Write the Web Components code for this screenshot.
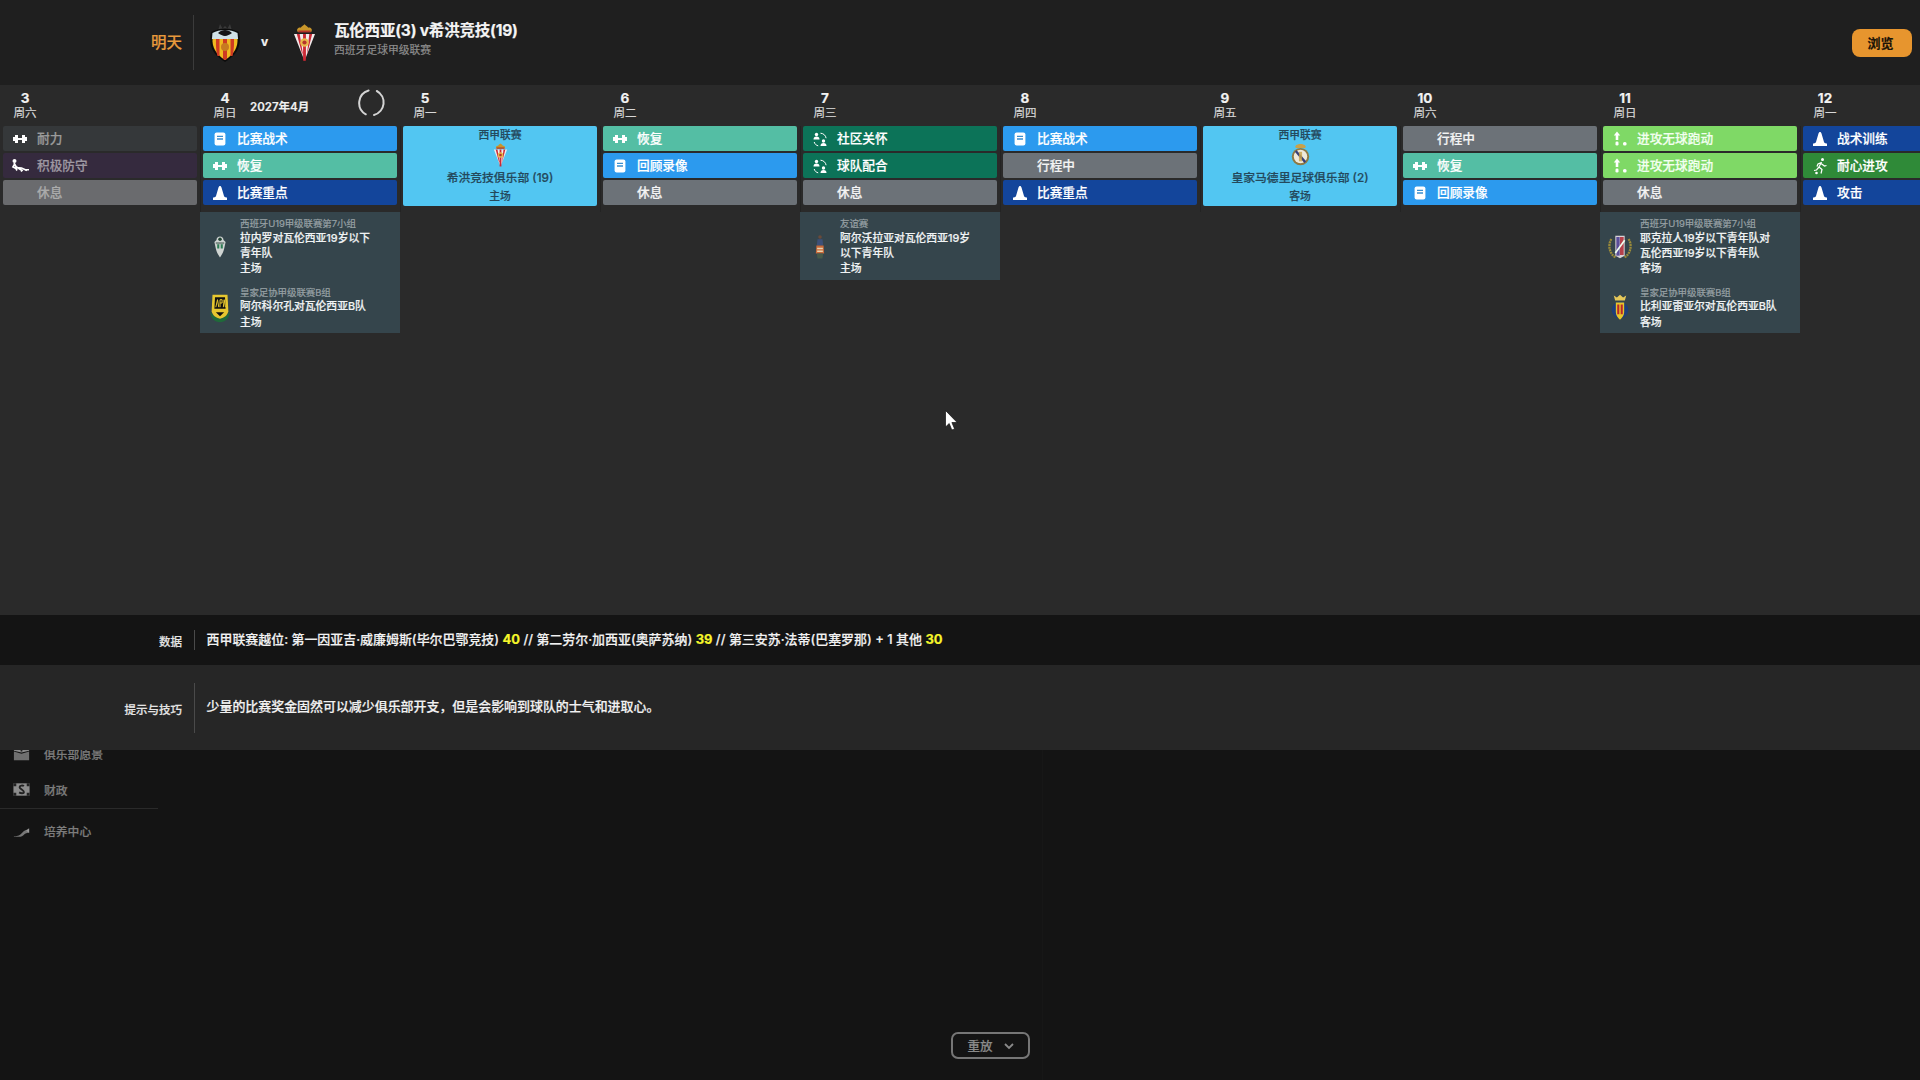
<!DOCTYPE html>
<html lang="zh">
<head>
<meta charset="utf-8">
<title>日程</title>
<style>
html,body{margin:0;height:100%;background:#141414;overflow:hidden}
body{
    font-family:Inter,"Noto Sans CJK SC",sans-serif;
    -webkit-text-stroke:.2px currentColor;
    color:#eee;
    display:flex;
    flex-direction:column;
    width:1920px;
    height:1080px;
}
</style>
</head>
<body>

<top-bar>
    <team-crest slot="home" name="valencia" w="32" h="40"></team-crest>
    <team-crest slot="away" name="gijon" w="23" h="39"></team-crest>
    <span slot="title">瓦伦西亚(3) v希洪竞技(19)</span>
    <span slot="sub">西班牙足球甲级联赛</span>
</top-bar>

<week-strip>
    <day-column num="3" day="周六">
        <day-slot kind="dimdark" icon="dumbbell">耐力</day-slot>
        <day-slot kind="dimpurple" icon="slide">积极防守</day-slot>
        <day-slot kind="dimgray">休息</day-slot>
    </day-column>
    <day-column num="4" day="周日" month="2027年4月">
        <day-slot kind="blue" icon="doc">比赛战术</day-slot>
        <day-slot kind="teal" icon="dumbbell">恢复</day-slot>
        <day-slot kind="navy" icon="cone">比赛重点</day-slot>
        <event-panel slot="events">
            <event-row crest="ranero" league="西班牙U19甲级联赛第7小组" place="主场">拉内罗对瓦伦西亚19岁以下青年队</event-row>
            <event-row crest="apa" league="皇家足协甲级联赛B组" place="主场">阿尔科尔孔对瓦伦西亚B队</event-row>
        </event-panel>
    </day-column>
    <day-column num="5" day="周一">
        <match-card crest="gijon" league="西甲联赛" place="主场">希洪竞技俱乐部 (19)</match-card>
    </day-column>
    <day-column num="6" day="周二">
        <day-slot kind="teal" icon="dumbbell">恢复</day-slot>
        <day-slot kind="blue" icon="doc">回顾录像</day-slot>
        <day-slot kind="gray">休息</day-slot>
    </day-column>
    <day-column num="7" day="周三">
        <day-slot kind="forest" icon="community">社区关怀</day-slot>
        <day-slot kind="forest" icon="community">球队配合</day-slot>
        <day-slot kind="gray">休息</day-slot>
        <event-panel slot="events">
            <event-row crest="alvorada" league="友谊赛" place="主场">阿尔沃拉亚对瓦伦西亚19岁以下青年队</event-row>
        </event-panel>
    </day-column>
    <day-column num="8" day="周四">
        <day-slot kind="blue" icon="doc">比赛战术</day-slot>
        <day-slot kind="gray">行程中</day-slot>
        <day-slot kind="navy" icon="cone">比赛重点</day-slot>
    </day-column>
    <day-column num="9" day="周五">
        <match-card crest="madrid" league="西甲联赛" place="客场">皇家马德里足球俱乐部 (2)</match-card>
    </day-column>
    <day-column num="10" day="周六">
        <day-slot kind="gray">行程中</day-slot>
        <day-slot kind="teal" icon="dumbbell">恢复</day-slot>
        <day-slot kind="blue" icon="doc">回顾录像</day-slot>
    </day-column>
    <day-column num="11" day="周日">
        <day-slot kind="lime" icon="attack">进攻无球跑动</day-slot>
        <day-slot kind="lime" icon="attack">进攻无球跑动</day-slot>
        <day-slot kind="gray">休息</day-slot>
        <event-panel slot="events">
            <event-row crest="yeclano" league="西班牙U19甲级联赛第7小组" place="客场">耶克拉人19岁以下青年队对瓦伦西亚19岁以下青年队</event-row>
            <event-row crest="villarreal" league="皇家足协甲级联赛B组" place="客场">比利亚雷亚尔对瓦伦西亚B队</event-row>
        </event-panel>
    </day-column>
    <day-column num="12" day="周一">
        <day-slot kind="navy" icon="cone">战术训练</day-slot>
        <day-slot kind="grass" icon="runner">耐心进攻</day-slot>
        <day-slot kind="navy" icon="cone">攻击</day-slot>
    </day-column>
</week-strip>

<info-row label="数据" tone="dark" rowheight="50" seph="20">西甲联赛越位: 第一因亚吉·威廉姆斯(毕尔巴鄂竞技) <b>40</b> // 第二劳尔·加西亚(奥萨苏纳) <b>39</b> // 第三安苏·法蒂(巴塞罗那) + 1 其他 <b>30</b></info-row>
<info-row label="提示与技巧" tone="mid" rowheight="85" seph="50">少量的比赛奖金固然可以减少俱乐部开支，但是会影响到球队的士气和进取心。</info-row>

<lower-area>
    <nav-item icon="vision">俱乐部愿景</nav-item>
    <nav-item icon="money" divider>财政</nav-item>
    <nav-item icon="growth">培养中心</nav-item>
</lower-area>

<screen-cursor></screen-cursor>

<script>
// icones des creneaux, dessinees dans une boite de 20x20
const ICONS = {
    dumbbell: `<path d="M3 8h2V6h3v3h4V6h3v2h2v4h-2v2h-3v-3H8v3H5v-2H3z" fill="#fff"/>`,
    doc: `<rect x="4.600" y="3.600" width="10.800" height="12.800" rx="2" fill="#fff"/><path d="M7 7.400h6M7 10h6" stroke="#3a8fd0" stroke-width="1.400"/>`,
    cone: `<path d="M10 3c.8 0 1.200.6 1.500 1.600L14 13c.3 1 1.500 1.400 3 1.600V17H3v-2.400c1.500-.2 2.700-.6 3-1.600l2.500-8.400C8.800 3.600 9.200 3 10 3z" fill="#fff"/>`,
    community: `<circle cx="6.500" cy="5.500" r="1.700" fill="#fff"/><path d="M3.500 10.500c0-2 1-3 3-3s3 1 3 3z" fill="#fff"/><circle cx="13.500" cy="12" r="1.700" fill="#fff"/><path d="M10.500 17c0-2 1-3 3-3s3 1 3 3z" fill="#fff"/><path d="M10.500 4.200c3 .2 5.200 2.200 5.600 5M4.200 13c.5 2 2 3.400 4 3.800" fill="none" stroke="#fff" stroke-width="1"/>`,
    attack: `<path d="M7 2.500l3.200 4H8.300V11H5.700V6.500H3.800z" fill="#fff"/><rect x="5.500" y="12.500" width="3" height="4" rx="1.300" fill="#fff"/><rect x="13" y="13" width="3.600" height="3.600" rx="1.600" fill="#fff"/>`,
    runner: `<circle cx="12.500" cy="3.500" r="1.500" fill="#fff"/><path d="M11.500 6L9 11l3 2.500-1 4M11 7.500l3.500 2.500 2-.5M9 11l-2.500 3-2.500.5M11.500 6.500L8 8l-1 2.500" fill="none" stroke="#fff" stroke-width="1.200"/><circle cx="6.500" cy="17" r="1.300" fill="#fff"/>`,
    slide: `<circle cx="4.500" cy="5" r="2" fill="#fff"/><path d="M4 7l2.500 4.500 5 .5 5.500 2.500M5 7.500l-2 3.500 3 1.500 1 2M6.500 11l5.500 3.500-1 1" fill="none" stroke="#fff" stroke-width="1.700"/><rect x="15" y="13" width="4" height="1.500" fill="#fff"/>`,
    vision: `<path d="M2 3h16v4l-8 2-8-2z" fill="#8a8a8a"/><path d="M2 8l8 2.200L18 8v9H2z" fill="#6f6f6f"/><circle cx="10" cy="7" r="1" fill="#222"/>`,
    money: `<rect x="1.500" y="3.500" width="17" height="13" fill="#8c8c8c"/><path d="M1.500 3.500h3v3h-3zM15.500 3.500h3v3h-3zM1.500 13.500h3v3h-3zM15.500 13.500h3v3h-3z" fill="#222"/><path d="M12.500 6.500c-1-1-4.500-1-4.500 1s4.500 3 4.500 5-3.500 1.500-5 .5" fill="none" stroke="#222" stroke-width="2"/>`,
    growth: `<path d="M2 16c5-.3 6-1 8.500-3.500C12.500 10.500 14 9.300 18 9v3c-3.500.5-4.500 1.500-6 3-1 1-2 1.500-3 1.500H2z" fill="#777"/><path d="M18 7.500v5l-3-2.500z" fill="#999"/>`,
}

// ecussons, simplifies
const CRESTS = {
    valencia: [32, 40, `
        <path d="M16 3l2.500 2.500L21 1l1.500 5c3 .8 5.500 2 7.500 4H2c2-2 4.500-3.200 7.500-4L11 1l2.500 4.500z" fill="#3a3a3a"/>
        <path d="M2 9c4-2.500 9-3.500 14-3.500S26 6.500 30 9c2 11 1 21-14 30C1 30 0 20 2 9z" fill="#0c0c0c"/>
        <path d="M3.500 10c3.500-2 8-3 12.500-3s9 1 12.500 3l.6 6H2.900z" fill="#cfe0e6"/>
        <path d="M9 10c2-2 4.500-3 7-3s5 1 7 3c-2.500 1.600-4.500 3-7 3s-4.500-1.400-7-3z" fill="#141414"/>
        <path d="M3.500 16h25c.4 8-3 15-12.500 21C6.500 31 3.100 24 3.500 16z" fill="#f0b820"/>
        <path d="M7 16h3.500v17H8.500C7.200 29 6.800 22 7 16zM14 16h4v20l-2 1-2-1zM21.500 16H25c.2 6-.2 13-1.500 17h-2z" fill="#cf3a22"/>
        <circle cx="16" cy="24" r="4" fill="#c77a20"/>`],
    gijon: [24, 40, `
        <path d="M5 9c-2-3 1-5 3-4.500C9 3 10.500 2.500 12 1c1.500 1.500 3 2 4 3.500 2-.5 5 1.500 3 4.500z" fill="#c9962a"/>
        <path d="M5.500 7.500h13v2h-13z" fill="#b5342b"/>
        <path d="M1 11h22L12 39z" fill="#f2ecec"/>
        <path d="M4 11h3l3.500 22-1.500-3zM10.500 11h3v28h-3zM17 11h3l-5.500 22z" fill="#c8202c" opacity=".95"/>
        <circle cx="12" cy="20" r="4.500" fill="#e8b84a"/><circle cx="12" cy="20" r="2.200" fill="#b5342b"/>`],
    madrid: [24, 30, `
        <path d="M6 6c-2-3 2-5 6-5s8 2 6 5z" fill="#c9a24a"/>
        <circle cx="12" cy="17" r="11" fill="#8f7a45"/>
        <circle cx="12" cy="17" r="8.500" fill="#efeadc"/>
        <path d="M6 10l12 14" stroke="#38407a" stroke-width="3"/>
        <path d="M10 11h4v12h-4z" fill="#c9a24a" opacity=".8"/>`],
    ranero: [20, 34, `
        <path d="M5 7c0-3 2-5 5-5s5 2 5 5l3 3-2 9c-1 5-3 8-6 13-3-5-5-8-6-13L2 10z" fill="#cfd4d2"/>
        <path d="M4 10h12v3H4z" fill="#7d8c86"/>
        <path d="M6 13h3v6H6zM11 13h3v6h-3z" fill="#2f7d55"/>
        <circle cx="10" cy="6" r="2.500" fill="#243"/>`],
    apa: [26, 36, `
        <path d="M1 22c1 9 6 13 12 13s11-4 12-13c-3 5-7 8-12 8S4 27 1 22z" fill="#1f6a3a"/>
        <path d="M4 2h18l1 20c-1 5-5 8-10 9-5-1-9-4-10-9z" fill="#e6c72f"/>
        <path d="M7 5h12l.7 14H6.300z" fill="#111"/>
        <path d="M8 17l2-9 1.500 9M13 17V8h2.500v4H13M17 17l1-9 1.500 9" stroke="#e6c72f" stroke-width="1.200" fill="none"/>
        <path d="M8 23h10l-5 5z" fill="#111"/>`],
    alvorada: [14, 36, `
        <circle cx="7" cy="4" r="2.500" fill="#6a4a3a"/>
        <path d="M3.500 7h7l1 9h-9z" fill="#3d5078"/>
        <path d="M2 16h10l.8 11H1.200z" fill="#c96a3a"/>
        <path d="M3 19h8v2H3zM3 23h8v2H3z" fill="#e6d4b0"/>
        <path d="M2.500 27h9l-1 7h-7z" fill="#475a4a"/>`],
    yeclano: [36, 40, `
        <path d="M5 8C0 16 1 30 12 36M31 8c5 8 4 22-7 28" fill="none" stroke="#9a8a3a" stroke-width="3.500" stroke-dasharray="3 1"/>
        <path d="M11 3h14v30l-7 4-7-4z" fill="#d8d2d6"/>
        <path d="M12.500 5h5v28h-5z" fill="#5a4d9a"/><path d="M18 5h5.500v27H18z" fill="#b5404a"/>
        <path d="M11 29L25 10" stroke="#efe" stroke-width="2.500"/>`],
    villarreal: [26, 40, `
        <path d="M6 9L4 2l4.500 3L13 1l4.500 4L22 2l-2 7z" fill="#e6c85a"/>
        <circle cx="13" cy="23" r="12" fill="#1e3f7a"/>
        <path d="M7 12h12v14c0 5-3 8-6 11-3-3-6-6-6-11z" fill="#e8c52a"/>
        <path d="M9 15h3v14H9zM14 15h3v14h-3z" fill="#b8262c"/>`],
}

class TeamCrest extends HTMLElement{
    constructor(){
        super()
        const [vw, vh, art] = CRESTS[this.getAttribute('name')]
        const w = this.getAttribute('w')
        const h = this.getAttribute('h')
        this.attachShadow({mode: 'open'}).innerHTML = `<style>
            :host{display:inline-flex;width:${w}px;height:${h}px;flex:none}
            svg{width:100%;height:100%;display:block}
        </style><svg viewBox="0 0 ${vw} ${vh}">${art}</svg>`
    }
}

class TopBar extends HTMLElement{
    constructor(){
        super()
        this.attachShadow({mode: 'open'}).innerHTML = `<style>
            :host{display:flex;flex:none;height:85px;background:#1f1f1f;align-items:center;padding-left:151px;box-sizing:border-box}
            .when{color:#e79a3c;font-size:15.500px;font-weight:500;width:31px;white-space:nowrap;transform:translateY(-2px)}
            .sep{width:1px;height:55px;background:#3b3b3b;margin:0 15px 0 11px}
            .team{display:flex;align-items:center;justify-content:center;width:32px}
            .vs{font-size:12px;font-weight:700;width:52px;text-align:center;color:#f2f2f2;padding-right:5px;box-sizing:border-box;transform:translateY(-1px)}
            .teamb{width:22px}
            .titles{margin-left:19px;display:flex;flex-direction:column;transform:translateY(-4px)}
            .title{font-size:15.500px;font-weight:700;color:#f4f4f4;line-height:22px;letter-spacing:-.2px}
            .sub{font-size:10.800px;color:#8d8d8d;line-height:15px;margin-top:1px}
            button{margin-left:auto;margin-right:8px;width:60px;height:28px;border:0;border-radius:8px;background:#e7952e;color:#1c1408;font:700 13px Inter,"Noto Sans CJK SC",sans-serif;padding:0 3px 0 0;-webkit-text-stroke:.2px #1c1408}
        </style>
        <span class="when">明天</span><span class="sep"></span>
        <span class="team"><slot name="home"></slot></span>
        <span class="vs">v</span>
        <span class="team teamb"><slot name="away"></slot></span>
        <div class="titles"><span class="title"><slot name="title"></slot></span><span class="sub"><slot name="sub"></slot></span></div>
        <button>浏览</button>`
    }
}

class WeekStrip extends HTMLElement{
    constructor(){
        super()
        this.attachShadow({mode: 'open'}).innerHTML = `<style>
            :host{display:flex;flex:none;height:530px;background:#2a2a2a;overflow:hidden}
        </style><slot></slot>`
    }
}

class DayColumn extends HTMLElement{
    constructor(){
        super()
        const month = this.getAttribute('month')
        this.attachShadow({mode: 'open'}).innerHTML = `<style>
            :host{display:block;flex:none;width:200px}
            .head{height:41px;display:flex;padding-left:13px;box-sizing:border-box}
            .date{display:flex;flex-direction:column;align-items:center;width:24px;padding-top:5px}
            .num{font-size:13.500px;font-weight:700;line-height:16px;color:#f2f2f2}
            .day{font-size:11.500px;line-height:14px;color:#d8d8d8;white-space:nowrap}
            .month{font-size:11.500px;font-weight:600;margin:15px 0 0 13px;line-height:14px;color:#f0f0f0;white-space:nowrap}
            svg{margin:4px 14px 0 auto}
            .slots{display:flex;flex-direction:column;gap:2px;padding:0 3px;height:86px;box-sizing:border-box;border-right:1px solid #232323;margin-right:-1px}
        </style>
        <div class="head">
            <div class="date"><span class="num">${this.getAttribute('num')}</span><span class="day">${this.getAttribute('day')}</span></div>
            ${month ? `<span class="month">${month}</span>
            <svg width="28" height="28" viewBox="0 0 28 28" fill="none" stroke="#d4d4d4" stroke-width="2" stroke-linecap="round"><path d="M10.600 1.500A13 13 0 0 0 7.800 25.300"/><path d="M18.800 2A13 13 0 0 1 16 26"/></svg>` : ''}
        </div>
        <div class="slots"><slot></slot></div>
        <slot name="events"></slot>`
    }
}

const SLOT_COLORS = {
    blue: ['#2c9aee', '#fff'],
    teal: ['#54bea4', '#fff'],
    navy: ['#13459b', '#fff'],
    gray: ['#6c7278', '#f4f4f4'],
    forest: ['#0c7358', '#fff'],
    lime: ['#7fd966', '#f2fff0'],
    grass: ['#2f8a38', '#fff'],
    dimdark: ['#35383a', '#9b9b9b'],
    dimpurple: ['#352a3e', '#9e98a2'],
    dimgray: ['#6a6b6e', '#ababab'],
}

class DaySlot extends HTMLElement{
    constructor(){
        super()
        const [bg, fg] = SLOT_COLORS[this.getAttribute('kind')]
        const icon = ICONS[this.getAttribute('icon')]
        this.attachShadow({mode: 'open'}).innerHTML = `<style>
            :host{display:flex;align-items:center;height:25px;border-radius:2px;background:${bg};color:${fg};font-size:12.700px;font-weight:500;flex:none}
            .ico{width:20px;height:20px;margin:0 7px;flex:none}
            svg{width:20px;height:20px;display:block}
            span.tx{transform:translateY(-1.500px)}
        </style><span class="ico">${icon ? `<svg viewBox="0 0 20 20">${icon}</svg>` : ''}</span><span class="tx"><slot></slot></span>`
    }
}

class MatchCard extends HTMLElement{
    constructor(){
        super()
        const name = this.getAttribute('crest')
        this.attachShadow({mode: 'open'}).innerHTML = `<style>
            :host{display:flex;flex-direction:column;align-items:center;height:80px;border-radius:2px;background:#52c6f2;color:#24495c;box-sizing:border-box;padding-top:3px}
            .lg{font-size:10.800px;line-height:13px;font-weight:500}
            .cr{height:24px;margin:1px 0 0;display:flex;align-items:center}
            .nm{font-size:11.800px;line-height:15px;font-weight:500;margin-top:4px}
            .pl{font-size:10.800px;line-height:14px;font-weight:500;margin-top:4px}
        </style>
        <span class="lg">${this.getAttribute('league')}</span>
        <span class="cr"><team-crest name="${name}" w="${name == 'madrid' ? 19 : 15}" h="24"></team-crest></span>
        <span class="nm"><slot></slot></span>
        <span class="pl">${this.getAttribute('place')}</span>`
    }
}

class EventPanel extends HTMLElement{
    constructor(){
        super()
        this.attachShadow({mode: 'open'}).innerHTML = `<style>
            :host{display:flex;flex-direction:column;gap:9.500px;background:#35454c;padding:5px 0 3.500px}
        </style><slot></slot>`
    }
}

const EVENT_CRESTS = {
    ranero: [14, 24], apa: [22, 30], alvorada: [10, 28], yeclano: [24, 28], villarreal: [18, 28],
}

class EventRow extends HTMLElement{
    constructor(){
        super()
        const name = this.getAttribute('crest')
        const [w, h] = EVENT_CRESTS[name]
        this.attachShadow({mode: 'open'}).innerHTML = `<style>
            :host{display:flex;align-items:center}
            .cr{width:40px;display:flex;justify-content:center;flex:none}
            .tx{width:140px;font-size:10.800px;line-height:15.300px;color:#f0f3f4;font-weight:500}
            .lg{font-size:9.500px;line-height:13px;color:#98a1a5;font-weight:400;white-space:nowrap;letter-spacing:-.1px;margin-bottom:.5px}
        </style>
        <span class="cr"><team-crest name="${name}" w="${w}" h="${h}"></team-crest></span>
        <div class="tx"><div class="lg">${this.getAttribute('league')}</div><slot></slot><div>${this.getAttribute('place')}</div></div>`
    }
}

class InfoRow extends HTMLElement{
    constructor(){
        super()
        const bg = this.getAttribute('tone') == 'dark' ? '#141414' : '#262626'
        this.attachShadow({mode: 'open'}).innerHTML = `<style>
            :host{display:flex;align-items:center;flex:none;height:${this.getAttribute('rowheight')}px;background:${bg}}
            .lb{width:182px;text-align:right;font-size:11.500px;font-weight:500;color:#e4e4e4;flex:none;transform:translateY(1px)}
            .sep{width:1px;height:${this.getAttribute('seph')}px;background:#4a4a4a;margin:0 11.500px 0 12px;flex:none}
            .tx{font-size:12.950px;font-weight:500;color:#f2f2f2;white-space:nowrap;transform:translateY(-2px)}
            ::slotted(b){color:#f6f62a;font-weight:700}
        </style><span class="lb">${this.getAttribute('label')}</span><span class="sep"></span><span class="tx"><slot></slot></span>`
    }
}

class LowerArea extends HTMLElement{
    constructor(){
        super()
        this.attachShadow({mode: 'open'}).innerHTML = `<style>
            :host{display:flex;flex:1;min-height:0;background:#141414;overflow:hidden}
            nav{width:158px;flex:none;margin-top:-14.500px}
            main{width:885px;flex:none;border-right:1px solid #171717;box-sizing:border-box;display:flex;justify-content:flex-end;align-items:flex-end;padding:0 12px 21px 0}
        </style><nav><slot></slot></nav><main><replay-button>重放</replay-button></main>`
    }
}

class NavItem extends HTMLElement{
    constructor(){
        super()
        const divider = this.hasAttribute('divider')
        this.attachShadow({mode: 'open'}).innerHTML = `<style>
            :host{display:flex;align-items:center;height:36px;font-size:11.800px;color:#7c7c7c;font-weight:500;${divider ? 'border-bottom:1px solid #2a2a2a;margin-bottom:3px;height:36.500px;' : ''}}
            svg{width:19px;height:19px;margin:0 13px 0 12px;flex:none}
        </style><svg viewBox="0 0 20 20">${ICONS[this.getAttribute('icon')]}</svg><slot></slot>`
    }
}

class ReplayButton extends HTMLElement{
    constructor(){
        super()
        this.attachShadow({mode: 'open'}).innerHTML = `<style>
            :host{display:flex;align-items:center;justify-content:center;gap:11px;width:79px;height:27px;box-sizing:border-box;border:2px solid #767676;border-radius:7px;color:#8a8a8a;font-size:12.500px;font-weight:500;padding-bottom:1px}
            svg{flex:none;margin-top:2px}
        </style><slot></slot><svg width="10" height="7" viewBox="0 0 10 7" fill="none" stroke="#8a8a8a" stroke-width="1.800"><path d="M1 1l4 4 4-4"/></svg>`
    }
}

class ScreenCursor extends HTMLElement{
    constructor(){
        super()
        this.attachShadow({mode: 'open'}).innerHTML = `<style>
            :host{position:absolute;left:945px;top:410px;width:13px;height:21px;z-index:5}
            svg{display:block}
        </style><svg width="13" height="21" viewBox="0 0 13 21"><path d="M.5.500v16.500l3.700-3.500 2.600 6.500 2.800-1.100-2.700-6.400h5.300z" fill="#fff" stroke="#111" stroke-width=".7"/></svg>`
    }
}

customElements.define('team-crest', TeamCrest)
customElements.define('top-bar', TopBar)
customElements.define('week-strip', WeekStrip)
customElements.define('day-column', DayColumn)
customElements.define('day-slot', DaySlot)
customElements.define('match-card', MatchCard)
customElements.define('event-panel', EventPanel)
customElements.define('event-row', EventRow)
customElements.define('info-row', InfoRow)
customElements.define('lower-area', LowerArea)
customElements.define('nav-item', NavItem)
customElements.define('replay-button', ReplayButton)
customElements.define('screen-cursor', ScreenCursor)
</script>
</body>
</html>
